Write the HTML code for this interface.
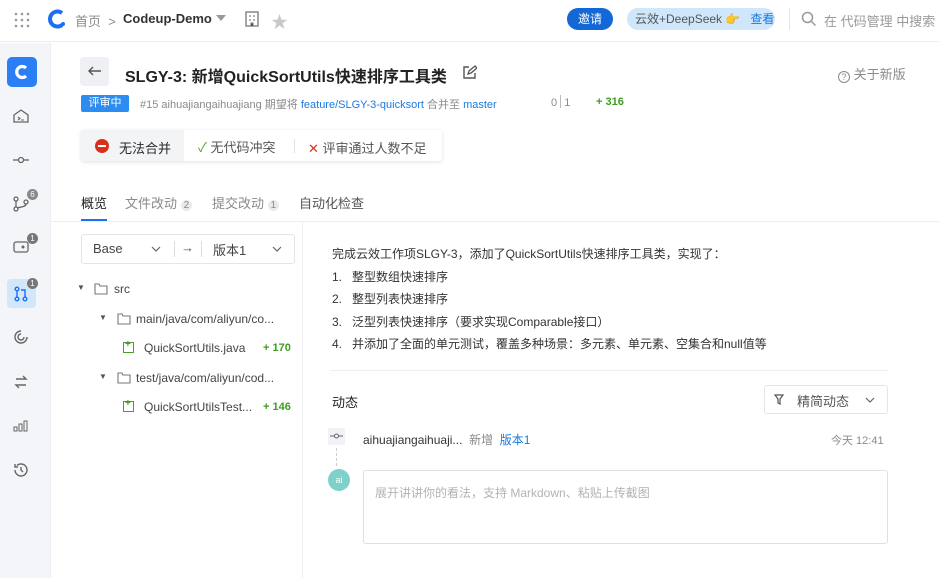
<!DOCTYPE html>
<html><head><meta charset="utf-8"><style>
*{margin:0;padding:0;box-sizing:border-box}
body{width:939px;height:578px;overflow:hidden;background:#fff;font-family:"Liberation Sans","Noto Sans CJK SC",sans-serif;color:#292929;position:relative;font-size:13px}
.a{position:absolute;white-space:nowrap}
.g{color:#8a8a8a}
.bl{color:#1b7ae0}
.gr{color:#3f9c1f;font-weight:bold;font-size:11px}
svg{position:absolute}
</style></head><body>
<div class="a" style="left:0;top:0;width:939px;height:42px;border-bottom:1px solid #eceef1"></div>
<svg style="left:14px;top:12px" width="16" height="16"><g fill="#999"><circle cx="2" cy="2" r="1.3"/><circle cx="8" cy="2" r="1.3"/><circle cx="14" cy="2" r="1.3"/><circle cx="2" cy="8" r="1.3"/><circle cx="8" cy="8" r="1.3"/><circle cx="14" cy="8" r="1.3"/><circle cx="2" cy="14" r="1.3"/><circle cx="8" cy="14" r="1.3"/><circle cx="14" cy="14" r="1.3"/></g></svg>
<svg style="left:47px;top:8px" width="20" height="22"><path d="M15 5 A7.5 7.5 0 1 0 15 17" stroke="#1b6ff5" stroke-width="4" fill="none"/><circle cx="16" cy="16" r="2" fill="#1b6ff5"/></svg>
<div class="a g" style="left:75px;top:11px;font-size:13px">首页 &nbsp;&gt;</div>
<div class="a" style="left:123px;top:11px;font-size:13px;font-weight:bold;color:#333">Codeup-Demo</div>
<svg style="left:216px;top:15px" width="10" height="6"><path d="M0 0h10L5 6z" fill="#999"/></svg>
<svg style="left:245px;top:11px" width="14" height="16"><rect x="1" y="1" width="12" height="14" fill="none" stroke="#888" stroke-width="1.5"/><path d="M4 5h2M8 5h2M4 9h2M8 9h2M6 15v-3h2v3" stroke="#888" stroke-width="1.2"/></svg>
<div class="a" style="left:271px;top:8px;font-size:17px;color:#c8c8c8">★</div>
<div class="a" style="left:567px;top:8px;width:46px;height:22px;border-radius:11px;background:#1467d6;color:#fff;font-size:12px;text-align:center;line-height:22px">邀请</div>
<div class="a" style="left:627px;top:8px;width:148px;height:22px;border-radius:11px;background:#cfe6fb;font-size:12px;line-height:22px;padding-left:8px;color:#555">云效+DeepSeek <span style="color:#f0a020">👉</span> &nbsp; <span class="bl">查看</span></div>
<div class="a" style="left:789px;top:8px;width:1px;height:22px;background:#e5e5e5"></div>
<svg style="left:801px;top:11px" width="16" height="16"><circle cx="6.5" cy="6.5" r="5" fill="none" stroke="#999" stroke-width="1.5"/><path d="M10.5 10.5l4 4" stroke="#999" stroke-width="1.5"/></svg>
<div class="a" style="left:824px;top:11px;color:#9a9a9a;font-size:13px">在 代码管理 中搜索</div>
<div class="a" style="left:0;top:43px;width:51px;height:535px;background:#f3f5f8;border-right:1px solid #eceef1"></div>
<div class="a" style="left:7px;top:57px;width:30px;height:30px;border-radius:5px;background:#2c7ef5"></div>
<svg style="left:12px;top:62px" width="20" height="20"><path d="M14 6 A5.5 5.5 0 1 0 14 14" stroke="#fff" stroke-width="3.2" fill="none"/></svg>
<svg style="left:13px;top:109px" width="16" height="14"><path d="M1 6L8 1l7 5v7H1z" fill="none" stroke="#666" stroke-width="1.3"/><path d="M5 8l2 1.5L5 11M8 11h3" stroke="#666" stroke-width="1.1" fill="none"/></svg>
<svg style="left:13px;top:156px" width="16" height="8"><path d="M0 4h16" stroke="#666" stroke-width="1.3"/><circle cx="8" cy="4" r="2.5" fill="#f3f5f8" stroke="#666" stroke-width="1.3"/></svg>
<svg style="left:13px;top:196px" width="16" height="16"><circle cx="3" cy="13" r="2" fill="none" stroke="#666" stroke-width="1.3"/><circle cx="3" cy="3" r="2" fill="none" stroke="#666" stroke-width="1.3"/><circle cx="13" cy="6" r="2" fill="none" stroke="#666" stroke-width="1.3"/><path d="M3 5v6M13 8c0 3-6 3-9 4" stroke="#666" stroke-width="1.3" fill="none"/></svg>
<div class="a" style="left:27px;top:189px;width:11px;height:11px;border-radius:50%;background:#888;color:#fff;font-size:8px;text-align:center;line-height:11px">6</div>
<svg style="left:13px;top:241px" width="16" height="12"><rect x="1" y="1" width="14" height="10" rx="2" fill="none" stroke="#666" stroke-width="1.3"/><circle cx="10" cy="6" r="1.5" fill="#666"/></svg>
<div class="a" style="left:27px;top:233px;width:11px;height:11px;border-radius:50%;background:#777;color:#fff;font-size:8px;text-align:center;line-height:11px">1</div>
<div class="a" style="left:7px;top:279px;width:29px;height:29px;border-radius:4px;background:#d3e7fb"></div>
<svg style="left:13px;top:286px" width="16" height="16"><circle cx="4" cy="3" r="1.8" fill="none" stroke="#1b6ff5" stroke-width="1.4"/><circle cx="4" cy="13" r="1.8" fill="none" stroke="#1b6ff5" stroke-width="1.4"/><circle cx="12" cy="13" r="1.8" fill="none" stroke="#1b6ff5" stroke-width="1.4"/><path d="M4 5v6M12 11V4H8" stroke="#1b6ff5" stroke-width="1.4" fill="none"/></svg>
<div class="a" style="left:27px;top:278px;width:11px;height:11px;border-radius:50%;background:#777;color:#fff;font-size:8px;text-align:center;line-height:11px">1</div>
<svg style="left:13px;top:329px" width="16" height="16"><path d="M14 8A6 6 0 1 1 8 2M11 8A3 3 0 1 1 8 5" fill="none" stroke="#666" stroke-width="1.4"/></svg>
<svg style="left:14px;top:374px" width="14" height="16"><path d="M2 5h10l-3-3M12 11H2l3 3" fill="none" stroke="#666" stroke-width="1.4"/></svg>
<svg style="left:13px;top:420px" width="16" height="12"><rect x="1" y="7" width="3" height="4" fill="none" stroke="#666"/><rect x="6" y="4" width="3" height="7" fill="none" stroke="#666"/><rect x="11" y="1" width="3" height="10" fill="none" stroke="#666"/></svg>
<svg style="left:13px;top:462px" width="16" height="16"><path d="M2 8a6 6 0 1 0 2-4.5M2 2v3h3M8 5v3l2 2" fill="none" stroke="#666" stroke-width="1.4"/></svg>
<div class="a" style="left:80px;top:57px;width:29px;height:29px;border-radius:4px;background:#eef0f3"></div>
<svg style="left:88px;top:66px" width="14" height="10"><path d="M13 5H1M5 1L1 5l4 4" fill="none" stroke="#555" stroke-width="1.4"/></svg>
<div class="a" style="left:125px;top:63px;font-size:16px;font-weight:bold;color:#222">SLGY-3: 新增QuickSortUtils快速排序工具类</div>
<svg style="left:462px;top:65px" width="15" height="15"><path d="M7 2H2v11h11V8" fill="none" stroke="#555" stroke-width="1.4"/><path d="M6 9l1-3 6-5 2 2-6 5z" fill="none" stroke="#555" stroke-width="1.3"/></svg>
<div class="a g" style="left:838px;top:64px;font-size:13px"><span style="display:inline-block;width:12px;height:12px;border:1.3px solid #888;border-radius:50%;font-size:9px;text-align:center;line-height:10px;vertical-align:-1px">?</span> 关于新版</div>
<div class="a" style="left:81px;top:95px;width:48px;height:17px;background:#2d8cf0;color:#fff;font-size:11px;text-align:center;line-height:17px;border-radius:2px">评审中</div>
<div class="a g" style="left:140px;top:96px;font-size:11px">#15 aihuajiangaihuajiang 期望将 <span class="bl">feature/SLGY-3-quicksort</span> 合并至 <span class="bl">master</span></div>
<div class="a g" style="left:551px;top:95px;font-size:11px">0 <span style="display:inline-block;width:1px;height:13px;background:#bbb;vertical-align:-2px"></span> 1</div>
<div class="a gr" style="left:596px;top:96px">+ 316</div>
<div class="a" style="left:81px;top:130px;width:361px;height:31px;border-radius:3px;box-shadow:0 1px 4px rgba(0,0,0,.12);background:#fff"></div>
<div class="a" style="left:81px;top:130px;width:103px;height:31px;background:#f3f4f6"></div>
<div class="a" style="left:95px;top:139px;width:14px;height:14px;border-radius:50%;background:#d9301c"></div>
<div class="a" style="left:98px;top:145px;width:8px;height:2px;background:#fff"></div>
<div class="a" style="left:119px;top:138px;font-size:13px">无法合并</div>
<div class="a" style="left:198px;top:137px;font-size:13px;color:#555"><span style="color:#5aa02c">✓</span> 无代码冲突</div>
<div class="a" style="left:294px;top:139px;width:1px;height:14px;background:#e2e2e2"></div>
<div class="a" style="left:308px;top:138px;font-size:13px;color:#555"><span style="color:#d9301c">✕</span> 评审通过人数不足</div>
<div class="a" style="left:51px;top:221px;width:888px;height:1px;background:#eceef1"></div>
<div class="a" style="left:81px;top:193px;font-size:13px;color:#222">概览</div>
<div class="a" style="left:81px;top:219px;width:26px;height:2px;background:#1b6ff5"></div>
<div class="a g" style="left:125px;top:193px;font-size:13px">文件改动 <span style="display:inline-block;background:#e8eaed;border-radius:7px;font-size:10px;padding:0 3px">2</span></div>
<div class="a g" style="left:212px;top:193px;font-size:13px">提交改动 <span style="display:inline-block;background:#e8eaed;border-radius:7px;font-size:10px;padding:0 3px">1</span></div>
<div class="a" style="left:299px;top:193px;font-size:13px;color:#555">自动化检查</div>
<div class="a" style="left:302px;top:222px;width:1px;height:356px;background:#eceef1"></div>
<div class="a" style="left:81px;top:234px;width:214px;height:30px;border:1px solid #e3e5e8;border-radius:3px"></div>
<div class="a" style="left:93px;top:241px;font-size:13px;color:#444">Base</div>
<svg style="left:151px;top:246px" width="10" height="6"><path d="M1 1l4 4 4-4" fill="none" stroke="#666" stroke-width="1.2"/></svg>
<div class="a" style="left:174px;top:241px;width:1px;height:16px;background:#ddd"></div>
<div class="a" style="left:181px;top:240px;font-size:13px;color:#555">→</div>
<div class="a" style="left:201px;top:241px;width:1px;height:16px;background:#ddd"></div>
<div class="a" style="left:213px;top:240px;font-size:13px;color:#444">版本1</div>
<svg style="left:272px;top:246px" width="10" height="6"><path d="M1 1l4 4 4-4" fill="none" stroke="#666" stroke-width="1.2"/></svg>
<div class="a" style="left:77px;top:283px;font-size:8px;color:#555">▼</div>
<svg style="left:94px;top:283px" width="14" height="12"><path d="M1 1h4l1 2h7v8H1z" fill="none" stroke="#777" stroke-width="1.1"/></svg>
<div class="a" style="left:114px;top:282px;font-size:12px;color:#444">src</div>
<div class="a" style="left:99px;top:313px;font-size:8px;color:#555">▼</div>
<svg style="left:117px;top:313px" width="14" height="12"><path d="M1 1h4l1 2h7v8H1z" fill="none" stroke="#777" stroke-width="1.1"/></svg>
<div class="a" style="left:136px;top:312px;font-size:12px;color:#444">main/java/com/aliyun/co...</div>
<div class="a" style="left:123px;top:342px;width:11px;height:11px;border:1.3px solid #4a9e2a"></div>
<div class="a" style="left:125px;top:339px;font-size:10px;color:#4a9e2a;font-weight:bold">+</div>
<div class="a" style="left:144px;top:341px;font-size:12px;color:#444">QuickSortUtils.java</div>
<div class="a gr" style="left:263px;top:342px">+ 170</div>
<div class="a" style="left:99px;top:372px;font-size:8px;color:#555">▼</div>
<svg style="left:117px;top:372px" width="14" height="12"><path d="M1 1h4l1 2h7v8H1z" fill="none" stroke="#777" stroke-width="1.1"/></svg>
<div class="a" style="left:136px;top:371px;font-size:12px;color:#444">test/java/com/aliyun/cod...</div>
<div class="a" style="left:123px;top:401px;width:11px;height:11px;border:1.3px solid #4a9e2a"></div>
<div class="a" style="left:125px;top:398px;font-size:10px;color:#4a9e2a;font-weight:bold">+</div>
<div class="a" style="left:144px;top:400px;font-size:12px;color:#444">QuickSortUtilsTest...</div>
<div class="a gr" style="left:263px;top:401px">+ 146</div>
<div class="a" style="left:332px;top:243px;font-size:12px;color:#333;line-height:22.5px">完成云效工作项SLGY-3，添加了QuickSortUtils快速排序工具类，实现了：<br>1.&nbsp;&nbsp;&nbsp;整型数组快速排序<br>2.&nbsp;&nbsp;&nbsp;整型列表快速排序<br>3.&nbsp;&nbsp;&nbsp;泛型列表快速排序（要求实现Comparable接口）<br>4.&nbsp;&nbsp;&nbsp;并添加了全面的单元测试，覆盖多种场景：多元素、单元素、空集合和null值等</div>
<div class="a" style="left:330px;top:370px;width:558px;height:1px;background:#eceef1"></div>
<div class="a" style="left:332px;top:392px;font-size:13px;color:#222">动态</div>
<div class="a" style="left:764px;top:385px;width:124px;height:29px;border:1px solid #e3e5e8;border-radius:3px"></div>
<svg style="left:774px;top:394px" width="10" height="11"><path d="M1 1h8L6 5v5L4 9V5z" fill="none" stroke="#555" stroke-width="1.2"/></svg>
<div class="a" style="left:797px;top:391px;font-size:13px;color:#555">精简动态</div>
<svg style="left:865px;top:397px" width="10" height="6"><path d="M1 1l4 4 4-4" fill="none" stroke="#666" stroke-width="1.2"/></svg>
<div class="a" style="left:328px;top:428px;width:17px;height:17px;background:#f0f2f5;border-radius:2px"></div>
<svg style="left:330px;top:433px" width="13" height="6"><path d="M0 3h13" stroke="#666"/><circle cx="6.5" cy="3" r="2" fill="#f0f2f5" stroke="#666"/></svg>
<div class="a" style="left:336px;top:448px;width:1px;height:18px;border-left:1px dashed #ccc"></div>
<div class="a" style="left:363px;top:431px;font-size:12px;color:#333">aihuajiangaihuaji... &nbsp;<span class="g">新增</span> &nbsp;<span class="bl">版本1</span></div>
<div class="a g" style="left:831px;top:432px;font-size:11px">今天 12:41</div>
<div class="a" style="left:328px;top:469px;width:22px;height:22px;border-radius:50%;background:#7fd0c9;color:#fff;font-size:9px;text-align:center;line-height:22px">ai</div>
<div class="a" style="left:363px;top:470px;width:525px;height:74px;border:1px solid #dde1e6;border-radius:3px"></div>
<div class="a" style="left:375px;top:484px;font-size:12px;color:#b3b3b3">展开讲讲你的看法，支持 Markdown、粘贴上传截图</div>
</body></html>
